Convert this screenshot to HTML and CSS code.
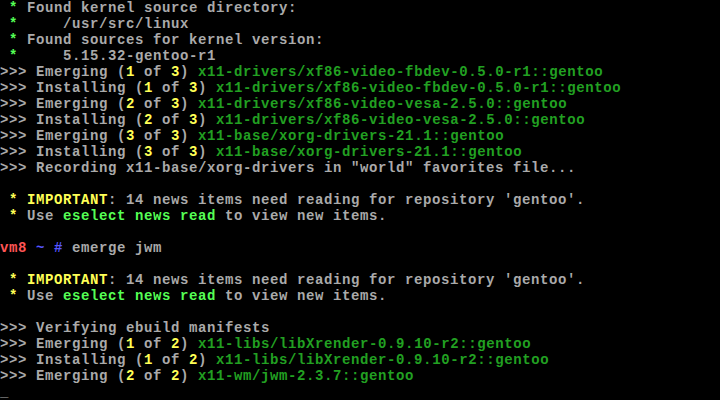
FILE: index.html
```html
<!DOCTYPE html>
<html>
<head>
<meta charset="utf-8">
<link rel="stylesheet" href="styles.css">
</head>
<body>
<div class="term">
<div class="ln"><span class="lg"> *</span> Found kernel source directory:</div>
<div class="ln"><span class="lg"> *</span>     /usr/src/linux</div>
<div class="ln"><span class="lg"> *</span> Found sources for kernel version:</div>
<div class="ln"><span class="lg"> *</span>     5.15.32-gentoo-r1</div>
<div class="ln">&gt;&gt;&gt; Emerging (<span class="ye">1</span> of <span class="ye">3</span>) <span class="gr">x11-drivers/xf86-video-fbdev-0.5.0-r1::gentoo</span></div>
<div class="ln">&gt;&gt;&gt; Installing (<span class="ye">1</span> of <span class="ye">3</span>) <span class="gr">x11-drivers/xf86-video-fbdev-0.5.0-r1::gentoo</span></div>
<div class="ln">&gt;&gt;&gt; Emerging (<span class="ye">2</span> of <span class="ye">3</span>) <span class="gr">x11-drivers/xf86-video-vesa-2.5.0::gentoo</span></div>
<div class="ln">&gt;&gt;&gt; Installing (<span class="ye">2</span> of <span class="ye">3</span>) <span class="gr">x11-drivers/xf86-video-vesa-2.5.0::gentoo</span></div>
<div class="ln">&gt;&gt;&gt; Emerging (<span class="ye">3</span> of <span class="ye">3</span>) <span class="gr">x11-base/xorg-drivers-21.1::gentoo</span></div>
<div class="ln">&gt;&gt;&gt; Installing (<span class="ye">3</span> of <span class="ye">3</span>) <span class="gr">x11-base/xorg-drivers-21.1::gentoo</span></div>
<div class="ln">&gt;&gt;&gt; Recording x11-base/xorg-drivers in "world" favorites file...</div>
<div class="ln"></div>
<div class="ln"><span class="ye"> *</span> <span class="ye">IMPORTANT</span>: 14 news items need reading for repository 'gentoo'.</div>
<div class="ln"><span class="ye"> *</span> Use <span class="lg">eselect news read</span> to view new items.</div>
<div class="ln"></div>
<div class="ln"><span class="rd">vm8</span> <span class="bl">~</span> <span class="bl">#</span> emerge jwm</div>
<div class="ln"></div>
<div class="ln"><span class="ye"> *</span> <span class="ye">IMPORTANT</span>: 14 news items need reading for repository 'gentoo'.</div>
<div class="ln"><span class="ye"> *</span> Use <span class="lg">eselect news read</span> to view new items.</div>
<div class="ln"></div>
<div class="ln">&gt;&gt;&gt; Verifying ebuild manifests</div>
<div class="ln">&gt;&gt;&gt; Emerging (<span class="ye">1</span> of <span class="ye">2</span>) <span class="gr">x11-libs/libXrender-0.9.10-r2::gentoo</span></div>
<div class="ln">&gt;&gt;&gt; Installing (<span class="ye">1</span> of <span class="ye">2</span>) <span class="gr">x11-libs/libXrender-0.9.10-r2::gentoo</span></div>
<div class="ln">&gt;&gt;&gt; Emerging (<span class="ye">2</span> of <span class="ye">2</span>) <span class="gr">x11-wm/jwm-2.3.7::gentoo</span></div>
<div class="ln"><span class="cursor">_</span></div>
</div>
</body>
</html>
```
FILE: styles.css
```css
html, body {
  margin: 0;
  padding: 0;
  background: #000;
  width: 720px;
  height: 400px;
  overflow: hidden;
}
.term {
  display: flex;
  flex-direction: column;
  font-family: "Liberation Mono", "DejaVu Sans Mono", monospace;
  font-size: 14px;
  letter-spacing: 0.6px;
  font-weight: bold;
  line-height: 16px;
  color: #aaaaaa;
  white-space: pre;
}
.ln {
  height: 16px;
  overflow: hidden;
}
.ln span {
  display: inline-block;
  vertical-align: top;
  height: 16px;
}
.lg { color: #55ff55; }
.gr { color: #22a022; }
.ye { color: #ffff55; }
.rd { color: #ff5555; }
.bl { color: #5555ff; }
.cursor { color: #aaaaaa; }
```
